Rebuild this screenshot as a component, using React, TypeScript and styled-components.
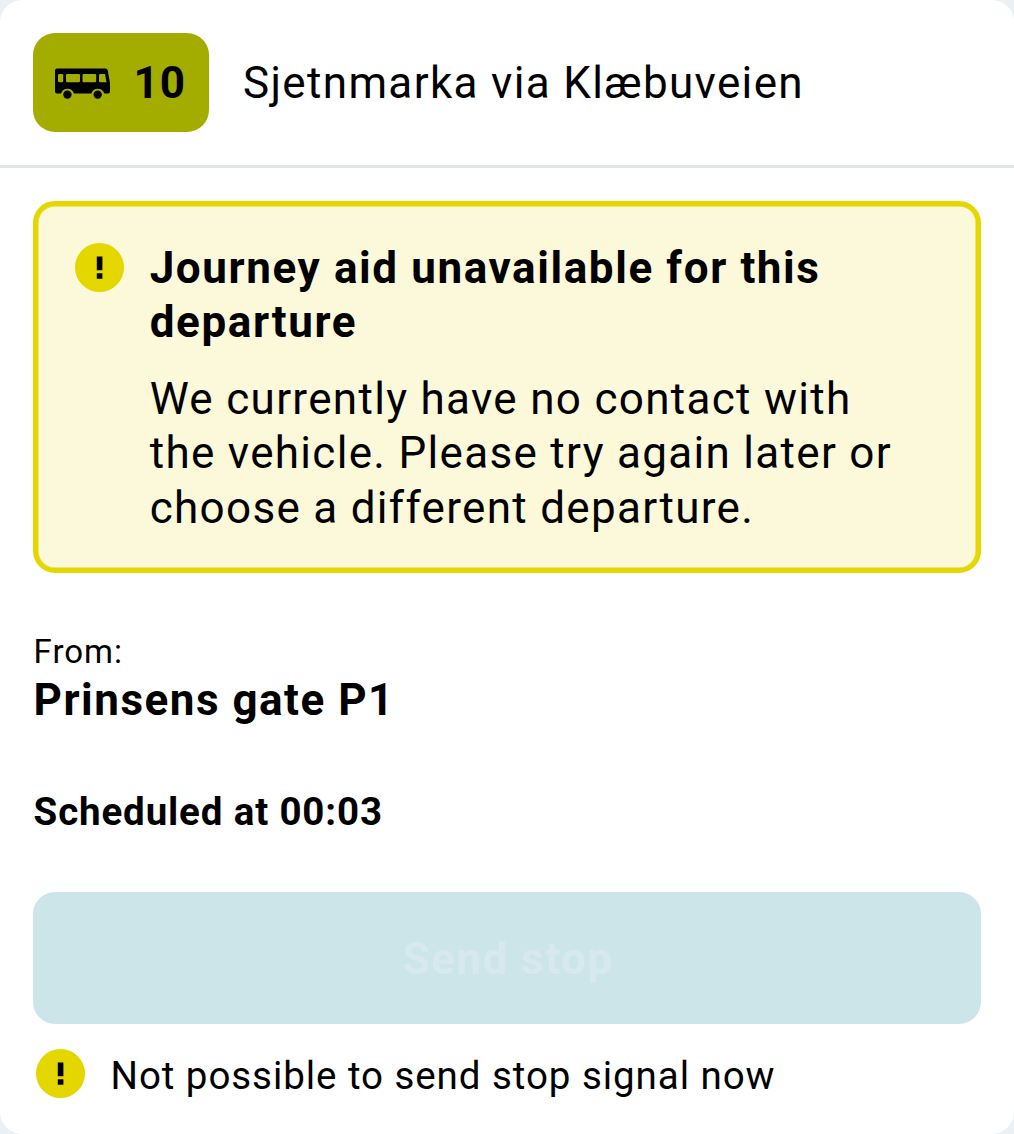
import React from 'react';
import styled, { createGlobalStyle } from 'styled-components';

const Global = createGlobalStyle`
  *{box-sizing:border-box}
  body{margin:0;background:#ebf0f4;font-family:Roboto,sans-serif;color:#000}
`;
const Sheet = styled.main`
  width:1014px;height:1134px;background:#fff;border-radius:22px;overflow:hidden;
`;
const Header = styled.header`
  height:168px;padding:33px;display:flex;align-items:flex-start;gap:34px;border-bottom:3px solid #e0e5e9;
`;
const LineBadge = styled.div`
  width:176px;height:99px;border-radius:22px;background:#a2ad00;display:flex;align-items:center;padding-left:22px;gap:23.5px;
`;
const BusSvg = styled.svg`width:55px;height:31px;display:block;margin-top:2px;`;
const Text = styled.div<{ $size: number; $line: number; $spacing: number; $bold?: boolean }>`
  font-size:${p => p.$size}px;line-height:${p => p.$line}px;letter-spacing:${p => p.$spacing}px;
  font-weight:${p => (p.$bold ? 700 : 400)};white-space:nowrap;
`;
const Title = styled.h1`
  margin:0;font-size:44px;font-weight:400;line-height:101px;letter-spacing:1.35px;white-space:nowrap;
`;
const Body = styled.div`padding:33px;display:flex;flex-direction:column;`;
const Notice = styled.section`
  height:372px;border:5px solid #e4d700;border-radius:22px;background:#fcf8da;
  box-shadow:inset 0 0 0 .5px #e4d700;
  padding:35px 37px;display:flex;align-items:flex-start;gap:25.7px;
`;
const NoticeIcon = styled.div`padding-top:2px;`;
const NoticeText = styled.div`display:flex;flex-direction:column;gap:22.2px;`;
const Stop = styled.section`margin-top:60px;padding-left:.6px;display:flex;flex-direction:column;gap:2px;`;
const Schedule = styled.div`margin-top:61px;padding-left:.6px;`;
const Button = styled.button`
  margin-top:57px;height:132px;border:0;padding:1px 0 0 2px;border-radius:22px;background:#cce5e9;color:#d7e9ef;
  font-family:inherit;font-size:44px;font-weight:700;letter-spacing:1.5px;
`;
const Status = styled.div`margin-top:25px;padding-left:3px;display:flex;align-items:flex-start;gap:25.5px;`;
const StatusText = styled.div`padding-top:2px;`;
const AlertSvg = styled.svg`width:49px;height:49px;flex:none;display:block;`;

const Alert = () => (
  <AlertSvg viewBox="0 0 49 49">
    <circle cx="24.5" cy="24.5" r="24.5" fill="#e4d700" />
    <path d="M21.8 13.5h5.6v13.7h-5.6zM21.8 30.2h5.6v5.6h-5.6z" />
  </AlertSvg>
);
const Bus = () => (
  <BusSvg viewBox="0 0 55 31">
    <path fillRule="evenodd" d="M2 .5H50.5Q52.3.5 52.7 2.3L55 15V23.5Q55 25.5 53 25.5H49.3A6.8 6.8 0 0 0 36.3 25.5H19A6.8 6.8 0 0 0 6 25.5H2Q0 25.5 0 23.5V2.5Q0 .5 2 .5ZM4.2 6Q3 6 3 7.2V13Q3 14.3 4.2 14.3H7Q8.2 14.3 8.2 13V7.2Q8.2 6 7 6ZM12.2 6Q11 6 11 7.2V13Q11 14.3 12.2 14.3H23.8Q25 14.3 25 13V7.2Q25 6 23.8 6ZM28.7 6Q27.5 6 27.5 7.2V13Q27.5 14.3 28.7 14.3H40Q41.2 14.3 41.2 13V7.2Q41.2 6 40 6ZM45.2 6Q44 6 44 7.2V13Q44 14.3 45.2 14.3H51.5L50 6Z" />
    <circle cx="12.4" cy="26.6" r="4.2" /><circle cx="42.7" cy="26.6" r="4.2" />
  </BusSvg>
);

export default function App() {
  return (
    <>
      <Global />
      <Sheet>
        <Header>
          <LineBadge><Bus /><Text $size={44} $line={54} $spacing={1} $bold>10</Text></LineBadge>
          <Title>Sjetnmarka via Klæbuveien</Title>
        </Header>
        <Body>
          <Notice>
            <NoticeIcon><Alert /></NoticeIcon>
            <NoticeText>
              <Text $size={44} $line={54.3} $spacing={1.6} $bold>Journey aid unavailable for this<br />departure</Text>
              <Text $size={44} $line={54.5} $spacing={1.31}>We currently have no contact with<br />the vehicle. Please try again later or<br />choose a different departure.</Text>
            </NoticeText>
          </Notice>
          <Stop>
            <Text $size={33} $line={38} $spacing={1}>From:</Text>
            <Text $size={44} $line={55} $spacing={1.5} $bold>Prinsens gate P1</Text>
          </Stop>
          <Schedule><Text $size={38.5} $line={46} $spacing={0.85} $bold>Scheduled at 00:03</Text></Schedule>
          <Button disabled>Send stop</Button>
          <Status><Alert /><StatusText><Text $size={38.5} $line={50} $spacing={0.94}>Not possible to send stop signal now</Text></StatusText></Status>
        </Body>
      </Sheet>
    </>
  );
}
